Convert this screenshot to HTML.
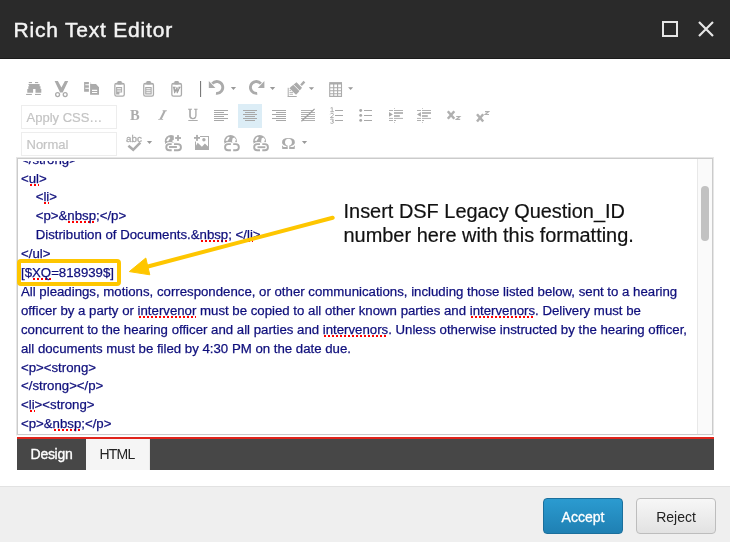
<!DOCTYPE html>
<html><head><meta charset="utf-8">
<style>
*{margin:0;padding:0;box-sizing:border-box}
html,body{width:730px;height:542px;overflow:hidden;background:#fff;font-family:"Liberation Sans",sans-serif}
.abs{position:absolute}
#hdr{left:0;top:0;width:730px;height:59px;background:#2a2a2a;border-bottom:1px solid #1b1b1b}
#title{left:13.5px;top:17.5px;font-size:21px;letter-spacing:0.8px;color:#f4f4f4;white-space:nowrap;line-height:24px;-webkit-text-stroke:0.45px #f4f4f4}
.dd{background:#fff;border:1px solid #ededed;color:#c4c4c4;font-size:13px;line-height:23px;padding-left:4.5px;white-space:nowrap;-webkit-text-stroke:0.2px #c4c4c4}
#ta{left:16px;top:157px;width:698px;height:279px;border:1px solid #e6e6e6;border-bottom-color:#fbfbfb;background:#fff}
#ta2{left:17px;top:158px;width:696px;height:277px;border:1px solid #cbcbcb}
#sb{left:697px;top:159px;width:15px;height:275px;background:#fafafa;border-left:1px solid #e8e8e8}
#thumb{left:701px;top:186px;width:8px;height:55px;background:#c2c2c2;border-radius:4px}
.ln{position:absolute;left:21px;font-size:13.23px;line-height:18.9px;color:#0f0f7c;white-space:pre;-webkit-text-stroke:0.25px #0f0f7c}
.sp{background-image:linear-gradient(to right,#f00 50%,transparent 50%);background-size:4px 2px;background-repeat:repeat-x;background-position:1px 100%}
#red{left:17px;top:437px;width:697px;height:2px;background:#e0241b}
#tabs{left:17px;top:439px;width:697px;height:31px;background:#474747}
#tdesign{left:17px;top:439px;width:69px;height:31px;color:#fff;font-size:14px;line-height:31px;text-align:center;-webkit-text-stroke:0.35px #fff;letter-spacing:-0.3px}
#thtml{left:86px;top:439px;width:64px;height:31px;background:#f5f5f5;border-right:1px solid #e9e9e9;color:#222;font-size:14px;line-height:31px;text-align:center;letter-spacing:-0.75px;padding-right:1px}
#foot{left:0;top:486px;width:730px;height:56px;background:#efefef;border-top:1px solid #e2e2e2}
.btn{position:absolute;top:498px;width:80px;height:36px;border-radius:4px;font-size:14px;line-height:35px;padding-top:1px;text-align:center}
#acc{left:543px;background:linear-gradient(#2b9bd0,#1f80b3);border:1px solid #1b6f9c;color:#fff;-webkit-text-stroke:0.3px #fff}
#rej{left:636px;background:linear-gradient(#f7f7f7,#e2e2e2);border:1px solid #bdbdbd;color:#222}
#note{left:343.5px;top:198.5px;font-size:19.95px;line-height:24.6px;color:#111;white-space:nowrap;-webkit-text-stroke:0.2px #111}
</style></head><body><div id="wrap" style="position:absolute;left:0;top:0;width:730px;height:542px;will-change:transform">
<div id="hdr" class="abs"></div>
<div id="title" class="abs">Rich Text Editor</div>
<svg class="abs" style="left:0;top:0" width="730" height="60">
  <rect x="663" y="22" width="14" height="14" fill="none" stroke="#e6e6e6" stroke-width="2"/>
  <path d="M699 22 L713 36 M713 22 L699 36" stroke="#e6e6e6" stroke-width="2.2"/>
</svg>

<div class="abs dd" style="left:21px;top:105px;width:96px;height:24px">Apply CSS…</div>
<div class="abs dd" style="left:21px;top:132px;width:96px;height:24px">Normal</div>
<div class="abs" style="left:238px;top:104px;width:24px;height:24px;background:#dcedf6"></div>


<svg class="abs" style="left:0;top:60px" width="520" height="100" viewBox="0 60 520 100">
<defs><mask id="cpm"><rect x="0" y="60" width="520" height="100" fill="#fff"/></mask></defs>
<g fill="#ababab" stroke="none">
  <!-- binoculars -->
  <rect x="28.8" y="82" width="3.2" height="1.1"/><rect x="35" y="82" width="3.2" height="1.1"/>
  <path d="M28.2 84.1 h4.4 v0 h2.4 h4.6 v2.2 h0.9 v2.7 h0.8 v3.8 h-5.8 v-3.8 h-2.4 v3.8 h-5.8 v-3.8 h1 v-2.7 h1.1 z"/>
  <rect x="26.1" y="93.9" width="5.8" height="1.1"/><rect x="35" y="93.9" width="5.8" height="1.1"/>
  <!-- copy -->
  <path d="M84.1 82 h4.8 v2.3 h-3.6 v1 h3.6 v2.5 h-3.6 v1 h3.6 v3 h-4.8 z"/>
  <path d="M90.3 82.3 l1.2 1.2 h-1.2 z"/>
  <path d="M90.1 84.1 h6 l2.9 3 v7.7 h-8.9 z M92 89.8 v1.1 h5.2 v-1.1 z M92 92 v1.1 h5.2 v-1.1 z" fill-rule="evenodd"/>
  <path d="M96.3 84.1 l2.7 0 v2.8 z" fill="#fff"/>
  <!-- paste 1 inner -->
  <path d="M116.1 87 h6 v7.5 h-6 z M117.2 88.2 v1.1 h4 v-1.1 z M117.2 90.4 v1.1 h4 v-1.1 z M119.4 92.5 v2 h2.7 v-2 z" fill-rule="evenodd"/>
  <!-- paste 2 inner -->
  <path d="M145.2 87 h6.5 v7.5 h-6.5 z M146.3 88.3 v1 h4.3 v-1 z M146.3 90.3 v1 h4.3 v-1 z M146.3 92.2 v1 h4.3 v-1 z" fill-rule="evenodd"/>
  <!-- clips -->
  <rect x="117.3" y="81" width="4.5" height="3.6" rx="1.3"/><rect x="115.5" y="83.4" width="8.2" height="1.2"/>
  <rect x="146.3" y="81" width="4.6" height="3.6" rx="1.3"/><rect x="144.5" y="83.4" width="8.4" height="1.2"/>
  <rect x="174.3" y="81" width="4.6" height="3.6" rx="1.3"/><rect x="172.5" y="83.4" width="8.4" height="1.2"/>
  <!-- undo/redo heads -->
  <path d="M208.8 80.9 v7.1 h6.6 z"/>
  <path d="M264.4 80.9 v7.1 h-6.6 z"/>
  <!-- scissors V -->
  <path d="M54.6 81.1 H57.9 L61.4 87.6 L64.9 81.1 H68.2 L62.7 92.4 H60.1 Z"/>
  <!-- table header -->
  <rect x="329.2" y="82.1" width="12.8" height="2.4"/>
  <!-- brush -->
  <rect x="287.7" y="87.8" width="1" height="9"/><rect x="287.7" y="96" width="9" height="1"/>
  <rect x="289.5" y="89.9" width="1.5" height="0.9"/><rect x="289.5" y="91.9" width="3.5" height="0.9"/><rect x="289.5" y="93.8" width="3.5" height="0.9"/>
  <path d="M291.5 86.2 L296.5 82.2 L302 87.7 L298 92.7 L296 94.8 L289.4 88.2 Z"/>
  <path d="M300.2 84.4 L303.5 80.8 L305.3 82.6 L301.9 86.1 Z"/>
</g>
<path d="M293.2 84.4 L300.1 91.3" stroke="#fff" stroke-width="0.9"/>
<g fill="#9a9a9a">
  <path d="M230.8 86.9 h5.3 l-2.65 3 z"/><path d="M269.9 86.9 h5.3 l-2.65 3 z"/>
  <path d="M308.8 87.2 h5.3 l-2.65 2.8 z"/><path d="M348.1 87.2 h5 l-2.5 2.7 z"/>
  <path d="M146.9 140.9 h5.2 l-2.6 3 z"/><path d="M301.9 140.9 h5.2 l-2.6 3.1 z"/>
</g>
<g fill="none" stroke="#ababab">
  <!-- scissors -->

  <circle cx="57.6" cy="94.6" r="1.95" stroke-width="1.3"/><circle cx="65.2" cy="94.6" r="1.95" stroke-width="1.3"/>
  <!-- clipboards -->
  <rect x="114.85" y="83.45" width="9.4" height="12.6" rx="1.6" stroke-width="1.3"/>
  <rect x="143.75" y="83.45" width="9.7" height="12.6" rx="1.6" stroke-width="1.3"/>
  <rect x="171.85" y="83.45" width="9.6" height="12.6" rx="1.6" stroke-width="1.3"/>
  <!-- undo/redo arcs -->
  <path d="M212.3 83.6 A5.95 5.95 0 1 1 216 93.35" stroke-width="2.8"/>
  <path d="M260.9 83.6 A5.95 5.95 0 1 0 257.2 93.35" stroke-width="2.8"/>
  <!-- table grid -->
  <path d="M329.7 84 v12.4 h11.8 v-12.4 M329.7 87.7 h11.8 M329.7 90.8 h11.8 M329.7 93.8 h11.8 M333.7 84 v12.4 M337.6 84 v12.4" stroke-width="1.1"/>
</g>
<text x="172.6" y="92.6" font-family="Liberation Serif" font-style="italic" font-weight="bold" font-size="7.6" fill="#a0a0a0" stroke="#a0a0a0" stroke-width="0.5" textLength="7.4" lengthAdjust="spacingAndGlyphs">W</text>
<!-- separator -->
<rect x="200" y="81" width="1.1" height="16" fill="#7a7a7a"/>
<!-- row 2 -->
<text x="130" y="119.8" font-family="Liberation Serif" font-weight="bold" font-size="14.5" fill="#adadad">B</text>
<path d="M162.6 110.3 h4.2 v0.9 h-1.1 l-3.8 7.7 h1.2 v0.9 h-4.9 v-0.9 h1.3 l3.9 -7.7 h-0.8 z" fill="#adadad"/>
<text x="188.1" y="118.7" font-family="Liberation Serif" font-size="14.2" fill="#a8a8a8" stroke="#a8a8a8" stroke-width="0.45" textLength="9.6" lengthAdjust="spacingAndGlyphs">U</text>
<rect x="188.3" y="120" width="9.4" height="1" fill="#adadad"/>
<g fill="#a8a8a8">
  <rect x="214" y="110" width="14" height="1"/><rect x="214" y="112" width="10" height="1"/><rect x="214" y="114" width="14" height="1"/><rect x="214" y="116" width="10" height="1"/><rect x="214" y="118" width="14" height="1"/><rect x="214" y="120" width="10" height="1"/>
  <rect x="243" y="110" width="14" height="1"/><rect x="245" y="112" width="10" height="1"/><rect x="243" y="114" width="14" height="1"/><rect x="245" y="116" width="10" height="1"/><rect x="243" y="118" width="14" height="1"/><rect x="245" y="120" width="10" height="1"/>
  <rect x="272" y="110" width="14" height="1"/><rect x="276" y="112" width="10" height="1"/><rect x="272" y="114" width="14" height="1"/><rect x="276" y="116" width="10" height="1"/><rect x="272" y="118" width="14" height="1"/><rect x="276" y="120" width="10" height="1"/>
  <rect x="301" y="110" width="12.5" height="0.9"/><rect x="301" y="112" width="14" height="0.9"/><rect x="301" y="114" width="14" height="0.9"/><rect x="301" y="116" width="14" height="0.9"/><rect x="301" y="118" width="14" height="0.9"/><rect x="303" y="120" width="12" height="0.9"/>
  <rect x="335" y="110" width="8" height="1"/><rect x="335" y="115" width="8" height="1"/><rect x="335" y="120" width="8" height="1"/>
  <circle cx="360.7" cy="110.5" r="1.45"/><circle cx="360.7" cy="115.4" r="1.45"/><circle cx="360.7" cy="120.4" r="1.45"/>
  <rect x="364" y="110" width="8" height="1"/><rect x="364" y="115" width="8" height="1"/><rect x="364" y="120" width="8" height="1"/>
  <!-- indent -->
  <rect x="389" y="110.1" width="4" height="0.9"/><rect x="394" y="110.1" width="9" height="0.9"/>
  <rect x="394" y="112.2" width="9" height="1.6"/><rect x="394" y="115.2" width="5.8" height="1.6"/>
  <path d="M389 112 l3.9 2.4 l-3.9 2.4 z"/>
  <rect x="389" y="117.9" width="4" height="0.9"/><rect x="394" y="117.9" width="9" height="0.9"/>
  <rect x="389" y="120" width="4" height="0.9"/><rect x="394" y="120" width="2" height="0.9"/>
  <rect x="394.1" y="108" width="0.8" height="0.8"/><rect x="394.1" y="122.1" width="0.8" height="0.8"/>
  <!-- outdent -->
  <rect x="417" y="110.1" width="4" height="0.9"/><rect x="422" y="110.1" width="9" height="0.9"/>
  <rect x="422" y="112.2" width="9" height="1.6"/><rect x="422" y="115.2" width="5.8" height="1.6"/>
  <path d="M420.9 112 l-3.9 2.4 l3.9 2.4 z"/>
  <rect x="417" y="117.9" width="4" height="0.9"/><rect x="422" y="117.9" width="9" height="0.9"/>
  <rect x="417" y="120" width="4" height="0.9"/><rect x="422" y="120" width="2" height="0.9"/>
  <rect x="422.1" y="108" width="0.8" height="0.8"/><rect x="422.1" y="122.1" width="0.8" height="0.8"/>
</g>
<path d="M301.4 121.3 L314.6 108.9" stroke="#a0a0a0" stroke-width="1.3"/>
<g fill="none" stroke="#a8a8a8" stroke-width="0.9">
  <path d="M330.6 108.1 l1.6 -0.6 v4.2 M330.3 111.7 h3.6"/>
  <path d="M330.3 114.3 q0.4 -1 1.6 -1 q1.6 0 1.6 1.2 q0 1 -3.2 3.1 h3.4"/>
  <path d="M330.3 119.7 q0.4 -0.6 1.6 -0.6 q1.6 0 1.6 1 q0 1 -1.6 1 q1.7 0 1.7 1.1 q0 1.2 -1.7 1.2 q-1.2 0 -1.6 -0.7"/>
</g>
<g stroke="#b0b0b0" stroke-width="2.5" fill="none">
  <path d="M447.8 111.2 L454.3 118.8 M454.3 111.2 L447.8 118.8"/>
  <path d="M477 114.2 L483.2 121.5 M483.2 114.2 L477 121.5"/>
</g>
<g font-family="Liberation Sans" font-weight="bold" font-size="6" fill="#b0b0b0">
<path d="M456.2 116.5 h3.6 l-3.4 2.8 h3.8 M485 111.7 h3.6 l-3.4 2.8 h3.8" stroke="#b0b0b0" stroke-width="1.2" fill="none"/>
</g>
<!-- row 3 -->
<text x="126" y="141.6" font-family="Liberation Sans" font-size="8.6" fill="#acacac" stroke="#acacac" stroke-width="0.3" textLength="15.8" lengthAdjust="spacingAndGlyphs">abc</text>
<path d="M128.4 145.8 L133.2 149.8 L140.3 142.6" stroke="#acacac" stroke-width="2.6" fill="none"/>
<!-- globes -->
<g fill="#acacac">
  <circle cx="171" cy="141.2" r="6.2"/><circle cx="230.5" cy="141.3" r="6.4"/><circle cx="259.6" cy="141.3" r="6.4"/>
</g>
<g fill="#fff">
  <path d="M166.2 140.5 l2.6 -3.4 l1.6 0.8 l-2.4 3.6 z M172 141 l1.6 -1.2 l1 1.6 l-1.2 1.2 z"/>
  <path d="M225.4 140.3 l2.6 -3.6 l1.8 0.9 l-2.6 3.6 z M232.6 138.2 l1.8 -0.6 l1.6 2 l-1 2.6 l-2.2 0.8 l-0.8 -1.6 z"/>
  <path d="M254.5 140.3 l2.6 -3.6 l1.8 0.9 l-2.6 3.6 z M261.7 138.2 l1.8 -0.6 l1.6 2 l-1 2.6 l-2.2 0.8 l-0.8 -1.6 z"/>
  <rect x="173.8" y="133" width="9" height="9.3"/>
</g>
<g fill="#fff"><rect x="165" y="142.4" width="16.8" height="9.5" rx="4"/><rect x="224" y="142.4" width="16.4" height="9.5" rx="4"/><rect x="253.1" y="142.4" width="16.4" height="9.5" rx="4"/></g>
<g fill="none" stroke="#fff" stroke-width="3.6">
  <path d="M171.7 144.1 h-2.4 a3.05 3.05 0 0 0 0 6.1 h2.4 M174 144.1 h3.9 a3.05 3.05 0 0 1 0 6.1 h-3.9"/>
  <path d="M230.9 144.15 h-2.8 a3.05 3.05 0 0 0 0 6.1 h2.8 M233.2 144.15 h2.6 a3.05 3.05 0 0 1 0 6.1 h-2.6"/>
  <path d="M260 144.15 h-2.8 a3.05 3.05 0 0 0 0 6.1 h2.8 M262.3 144.15 h2.6 a3.05 3.05 0 0 1 0 6.1 h-2.6"/>
</g>
<g fill="none" stroke="#acacac" stroke-width="1.9">
  <path d="M171.7 144.1 h-2.4 a3.05 3.05 0 0 0 0 6.1 h2.4 M174 144.1 h3.9 a3.05 3.05 0 0 1 0 6.1 h-3.9"/>
  <path d="M169 147 h7.9"/>
  <path d="M230.9 144.15 h-2.8 a3.05 3.05 0 0 0 0 6.1 h2.8 M233.2 144.15 h2.6 a3.05 3.05 0 0 1 0 6.1 h-2.6"/>
  <path d="M260 144.15 h-2.8 a3.05 3.05 0 0 0 0 6.1 h2.8 M262.3 144.15 h2.6 a3.05 3.05 0 0 1 0 6.1 h-2.6"/>
  <path d="M257.5 147.2 h7.8"/>
</g>
<g fill="#acacac">
  <rect x="177.1" y="135.1" width="1.8" height="5.8"/><rect x="175.1" y="137.1" width="5.9" height="1.8"/>
  <rect x="196.1" y="134.9" width="1.8" height="6"/><rect x="194" y="137" width="6" height="1.8"/>
  <path d="M200 135.9 h9 v14.1 h-14 v-8.5 h1 v7.5 h12 v-12.1 h-8 z"/>
  <path d="M195.5 150 v-3.5 l2.2 -3.8 l4.2 4 l3 -3.3 l3.6 3.6 v3 z"/>
  <circle cx="203.9" cy="139.7" r="1.7"/>
</g>
<text x="281.3" y="148.8" font-family="Liberation Serif" font-weight="bold" font-size="16.5" fill="#ababab" textLength="14.4" lengthAdjust="spacingAndGlyphs">Ω</text>
</svg>

<div id="ta" class="abs"></div><div id="ta2" class="abs"></div>
<div id="sb" class="abs"></div>
<div id="thumb" class="abs"></div>
<div class="abs" style="left:19px;top:161px;width:678px;height:273px;overflow:hidden;will-change:transform">
<div style="position:relative;left:-19px;top:-161px">
<div class="ln" style="top:150.6px">&lt;/strong&gt;</div>
<div class="ln" style="top:169.5px">&lt;<span class="sp">ul</span>&gt;</div>
<div class="ln" style="top:188.4px">    &lt;<span class="sp">li</span>&gt;</div>
<div class="ln" style="top:207.3px">    &lt;p&gt;&amp;<span class="sp">nbsp</span>;&lt;/p&gt;</div>
<div class="ln" style="top:226.2px">    Distribution of Documents.&amp;<span class="sp">nbsp</span>; &lt;/<span class="sp">li</span>&gt;</div>
<div class="ln" style="top:245.1px">&lt;/ul&gt;</div>
<div class="ln" style="top:264.0px">[$<span class="sp">XQ</span>=818939$]</div>
<div class="ln" style="top:282.9px">All pleadings, motions, correspondence, or other communications, including those listed below, sent to a hearing</div>
<div class="ln" style="top:301.8px">officer by a party or <span class="sp">intervenor</span> must be copied to all other known parties and <span class="sp">intervenors</span>. Delivery must be</div>
<div class="ln" style="top:320.7px">concurrent to the hearing officer and all parties and <span class="sp">intervenors</span>. Unless otherwise instructed by the hearing officer,</div>
<div class="ln" style="top:339.6px">all documents must be filed by 4:30 PM on the date due.</div>
<div class="ln" style="top:358.5px">&lt;p&gt;&lt;strong&gt;</div>
<div class="ln" style="top:377.4px">&lt;/strong&gt;&lt;/p&gt;</div>
<div class="ln" style="top:396.3px">&lt;<span class="sp">li</span>&gt;&lt;strong&gt;</div>
<div class="ln" style="top:415.2px">&lt;p&gt;&amp;<span class="sp">nbsp</span>;&lt;/p&gt;</div>
</div></div>

<div id="red" class="abs"></div>
<div id="tabs" class="abs"></div>
<div id="tdesign" class="abs">Design</div>
<div id="thtml" class="abs">HTML</div>

<div id="foot" class="abs"></div>
<div id="acc" class="btn">Accept</div>
<div id="rej" class="btn">Reject</div>

<!-- annotation -->
<svg class="abs" style="left:0;top:0" width="730" height="542">
  <rect x="19" y="261" width="100" height="22.9" rx="2" fill="none" stroke="#fec600" stroke-width="4"/>
  <line x1="332.7" y1="217.7" x2="146" y2="267" stroke="#fec600" stroke-width="4" stroke-linecap="round"/>
  <path d="M129.3 271.6 L145.8 258 L149.8 274.8 Z" fill="#fec600" stroke="#fec600" stroke-width="1" stroke-linejoin="round"/>
</svg>
<div id="note" class="abs">Insert DSF Legacy Question_ID<br>number here with this formatting.</div>
</div></body></html>
